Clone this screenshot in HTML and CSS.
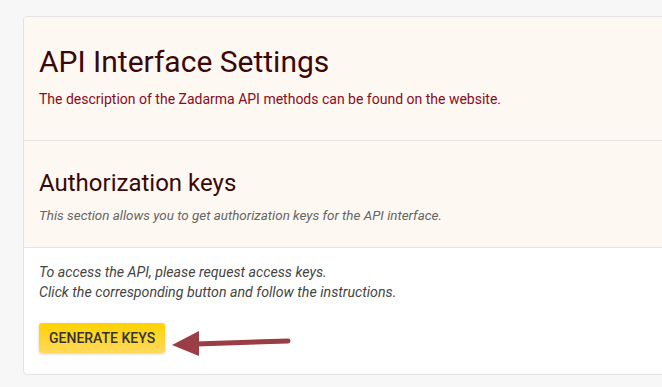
FILE: index.html
```html
<!DOCTYPE html>
<html>
<head>
<meta charset="utf-8">
<link rel="stylesheet" href="styles.css">
</head>
<body>
<div class="card">
  <section class="sec sec-head">
    <h1 class="title">API Interface Settings</h1>
    <p class="desc">The description of the Zadarma API methods can be found on the website.</p>
  </section>
  <section class="sec sec-sub">
    <h2 class="subtitle">Authorization keys</h2>
    <p class="hint">This section allows you to get authorization keys for the API interface.</p>
  </section>
  <section class="sec sec-body">
    <p class="info">To access the API, please request access keys.<br>Click the corresponding button and follow the instructions.</p>
    <div class="actions">
      <button class="btn">GENERATE KEYS</button>
      <svg class="arrow" width="130" height="30" viewBox="0 0 130 30">
        <path d="M24 14 L116 11" stroke="#9a3d44" stroke-width="5" stroke-linecap="round" fill="none"/>
        <polygon points="0,15 27,1 27,26" fill="#9a3d44"/>
      </svg>
    </div>
  </section>
</div>
</body>
</html>
```
FILE: styles.css
```css
html, body {
  margin: 0;
  padding: 0;
}
body {
  background: #f7f7f7;
  font-family: Roboto, "Noto Sans", sans-serif;
  overflow: hidden;
  width: 662px;
  height: 387px;
}
.card {
  margin: 16px 0 0 23px;
  width: 700px;
  border: 1px solid #e3e3e3;
  border-radius: 4px;
  background: #fff;
  overflow: hidden;
}
.sec {
  padding: 0 15px;
}
.sec-head {
  background: #fdf8f1;
  height: 122px;
  border-bottom: 1px solid #e6e3e0;
  padding-top: 1px;
}
.title {
  margin: 26px 0 0;
  font-size: 30px;
  font-weight: 400;
  line-height: 36px;
  color: #3a0808;
}
.desc {
  margin: 10px 0 0;
  font-size: 14px;
  line-height: 18px;
  color: #8a0a1e;
}
.sec-sub {
  background: #fdf8f1;
  height: 105px;
  border-bottom: 1px solid #e6e3e0;
  padding-top: 1px;
}
.subtitle {
  margin: 26px 0 0;
  font-size: 24px;
  font-weight: 400;
  line-height: 30px;
  color: #3a0808;
}
.hint {
  margin: 9px 0 0;
  font-size: 13.4px;
  line-height: 18px;
  font-style: italic;
  color: #666;
}
.sec-body {
  padding-top: 14px;
  padding-bottom: 14px;
}
.info {
  margin: 0;
  font-size: 14.2px;
  line-height: 20px;
  font-style: italic;
  color: #444;
}
.actions {
  display: flex;
  align-items: flex-start;
  margin-top: 21px;
}
.btn {
  height: 30px;
  padding: 0 10px;
  border: none;
  border-radius: 3px;
  background: linear-gradient(#ffd200, #ffd95c);
  box-shadow: 0 1px 3px rgba(0,0,0,0.2);
  font-family: Roboto, sans-serif;
  font-size: 14px;
  font-weight: 500;
  color: #333;
}
.arrow {
  margin-left: 7px;
  margin-top: 7px;
}
```
